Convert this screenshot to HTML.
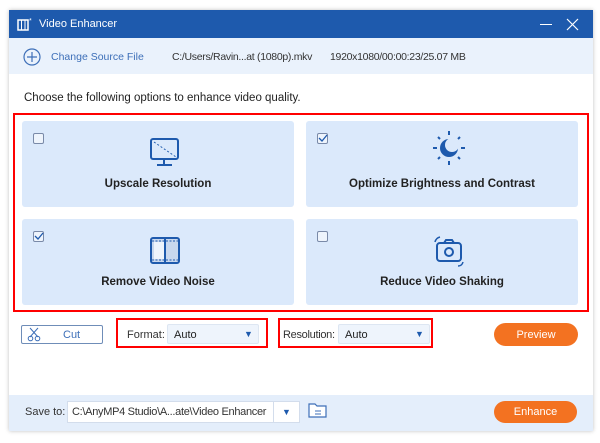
<!DOCTYPE html>
<html><head><style>
*{margin:0;padding:0;box-sizing:border-box}
body{width:600px;height:443px;background:#fff;font-family:"Liberation Sans",sans-serif;position:relative;overflow:hidden}
.a{position:absolute}
.win{left:9px;top:10px;width:584px;height:421px;background:#fff;box-shadow:0 0 4px rgba(0,0,0,.25)}
.title{left:9px;top:10px;width:584px;height:28px;background:#1e5aad;color:#fff;font-size:11px}
.src{left:9px;top:38px;width:584px;height:36px;background:#eaf2fc;font-size:10.5px;color:#333;white-space:nowrap}
.tile{background:#dbe9fb;border-radius:3px}
.lbl{font-weight:bold;font-size:11.5px;color:#222;text-align:center;width:100%}
.cb{width:11px;height:11px;border:1px solid #7a8aa8;border-radius:2px;background:#eef4fc}
.red{border:2px solid #f00}
.sel{background:#eef4fc;border:1px solid #dde6f2;border-radius:2px;font-size:11px;color:#222}
.orange{background:#f37221;color:#fff;font-size:11px;border-radius:12px;display:flex;align-items:center;justify-content:center}
</style></head><body>
<div class="a win"></div>
<div class="a title">
 <svg class="a" style="left:8px;top:7px" width="16" height="14"><rect x="1" y="3" width="10" height="10" fill="none" stroke="#fff" stroke-width="1.5"/><line x1="4.5" y1="3" x2="4.5" y2="13" stroke="#fff"/><line x1="8" y1="3" x2="8" y2="13" stroke="#fff"/><text x="12" y="6" fill="#fff" font-size="7">*</text></svg>
 <span class="a" style="left:30px;top:8px">Video Enhancer</span>
 <div class="a" style="left:531px;top:14px;width:12px;height:1px;background:#fff"></div>
 <svg class="a" style="left:557px;top:8px" width="13" height="13"><path d="M1 1L12 12M12 1L1 12" stroke="#fff" stroke-width="1.2"/></svg>
</div>
<div class="a src">
 <svg class="a" style="left:14px;top:10px" width="18" height="18"><circle cx="9" cy="9" r="8" fill="none" stroke="#3d6fb8" stroke-width="1.2"/><path d="M9 4V14M4 9H14" stroke="#3d6fb8" stroke-width="1.2"/></svg>
 <span class="a" style="left:42px;top:13px;color:#3d6fb8">Change Source File</span>
 <span class="a" style="left:163px;top:13px;letter-spacing:-0.3px">C:/Users/Ravin...at (1080p).mkv</span>
 <span class="a" style="left:321px;top:13px;letter-spacing:-0.3px">1920x1080/00:00:23/25.07 MB</span>
</div>
<div class="a" style="left:24px;top:92px;font-size:11.5px;color:#222">Choose the following options to enhance video quality.</div>
<div class="a red" style="left:13px;top:113px;width:576px;height:199px"></div>

<div class="a tile" style="left:22px;top:121px;width:272px;height:86px">
 <div class="a cb" style="left:11px;top:12px"></div>
 <svg class="a" style="left:127px;top:16px" width="32" height="32"><rect x="2" y="2" width="27" height="20" rx="2" fill="none" stroke="#1e5aad" stroke-width="2"/><path d="M5 5L27 20" stroke="#1e5aad" stroke-dasharray="2 2"/><path d="M15 22V27M8 28H23" stroke="#1e5aad" stroke-width="2"/></svg>
 <div class="a lbl" style="top:57px">Upscale Resolution</div>
</div>
<div class="a tile" style="left:306px;top:121px;width:272px;height:86px">
 <div class="a cb" style="left:11px;top:12px"></div>
 <svg class="a" style="left:12px;top:13px" width="10" height="9"><path d="M1 4L4 7L9 1" fill="none" stroke="#1e5aad" stroke-width="1.3"/></svg>
 <svg class="a" style="left:126px;top:8px" width="34" height="38"><circle cx="17" cy="19" r="9" fill="#1e5aad"/><circle cx="20" cy="16" r="7" fill="#dbe9fb"/><g stroke="#1e5aad" stroke-width="2"><path d="M17 2V6M17 32V36M1 19H5M29 19H33M6 8L8 10M26 28L28 30M28 8L26 10M6 30L8 28"/></g></svg>
 <div class="a lbl" style="top:57px">Optimize Brightness and Contrast</div>
</div>
<div class="a tile" style="left:22px;top:219px;width:272px;height:86px">
 <div class="a cb" style="left:11px;top:12px"></div>
 <svg class="a" style="left:12px;top:13px" width="10" height="9"><path d="M1 4L4 7L9 1" fill="none" stroke="#1e5aad" stroke-width="1.3"/></svg>
 <svg class="a" style="left:127px;top:17px" width="32" height="30"><rect x="2" y="2" width="28" height="25" rx="2" fill="#c9d8ee" stroke="#1e5aad" stroke-width="2"/><rect x="5" y="6" width="10" height="17" fill="#eef4fc"/><path d="M16 2V27" stroke="#1e5aad" stroke-width="2"/><path d="M3 5H29M3 24H29" stroke="#1e5aad" stroke-dasharray="2 1.5"/></svg>
 <div class="a lbl" style="top:57px">Remove Video Noise</div>
</div>
<div class="a tile" style="left:306px;top:219px;width:272px;height:86px">
 <div class="a cb" style="left:11px;top:12px"></div>
 <svg class="a" style="left:126px;top:15px" width="34" height="34"><rect x="5" y="9" width="24" height="18" rx="3" fill="none" stroke="#1e5aad" stroke-width="2"/><path d="M12 9L14 6H20L22 9" fill="none" stroke="#1e5aad" stroke-width="2"/><circle cx="17" cy="18" r="4" fill="none" stroke="#1e5aad" stroke-width="2"/><path d="M3 8Q4 4 8 3M31 28Q30 32 26 32" fill="none" stroke="#1e5aad" stroke-width="1.5"/></svg>
 <div class="a lbl" style="top:57px">Reduce Video Shaking</div>
</div>

<div class="a" style="left:21px;top:325px;width:82px;height:19px;border:1px solid #6f8db8;border-radius:2px;background:#fff"></div>
<svg class="a" style="left:27px;top:327px" width="14" height="15"><path d="M3 1L11 10M11 1L3 10" stroke="#3d6fb8"/><circle cx="3.5" cy="11.5" r="2.3" fill="none" stroke="#3d6fb8"/><circle cx="10.5" cy="11.5" r="2.3" fill="none" stroke="#3d6fb8"/></svg>
<span class="a" style="left:63px;top:329px;font-size:11px;color:#3d6fb8">Cut</span>

<div class="a red" style="left:116px;top:318px;width:152px;height:30px"></div>
<span class="a" style="left:127px;top:329px;font-size:11px;color:#333">Format:</span>
<div class="a sel" style="left:167px;top:324px;width:92px;height:20px"><span class="a" style="left:6px;top:4px">Auto</span><span class="a" style="left:76px;top:4px;color:#1e5aad;font-size:9px">▼</span></div>

<div class="a red" style="left:278px;top:318px;width:155px;height:30px"></div>
<span class="a" style="left:283px;top:329px;font-size:11px;color:#333;letter-spacing:-0.3px">Resolution:</span>
<div class="a sel" style="left:338px;top:324px;width:92px;height:20px"><span class="a" style="left:6px;top:4px">Auto</span><span class="a" style="left:76px;top:4px;color:#1e5aad;font-size:9px">▼</span></div>

<div class="a orange" style="left:494px;top:323px;width:84px;height:23px">Preview</div>

<div class="a" style="left:9px;top:395px;width:584px;height:36px;background:#e4eefb"></div>
<span class="a" style="left:25px;top:406px;font-size:11px;color:#333">Save to:</span>
<div class="a" style="left:67px;top:401px;width:233px;height:22px;background:#fff;border:1px solid #d3ddec"></div>
<div class="a" style="left:273px;top:401px;width:1px;height:22px;background:#d3ddec"></div>
<span class="a" style="left:72px;top:406px;font-size:11px;color:#333;letter-spacing:-0.3px">C:\AnyMP4 Studio\A...ate\Video Enhancer</span>
<span class="a" style="left:282px;top:407px;color:#1e5aad;font-size:9px">▼</span>
<svg class="a" style="left:308px;top:402px" width="20" height="17"><path d="M1 2H7L9 4H18V15H1Z" fill="#fff" stroke="#3d6fb8" stroke-width="1.2"/><path d="M7 9H13M7 12H13" stroke="#3d6fb8"/></svg>
<div class="a orange" style="left:494px;top:401px;width:83px;height:22px">Enhance</div>
</body></html>
